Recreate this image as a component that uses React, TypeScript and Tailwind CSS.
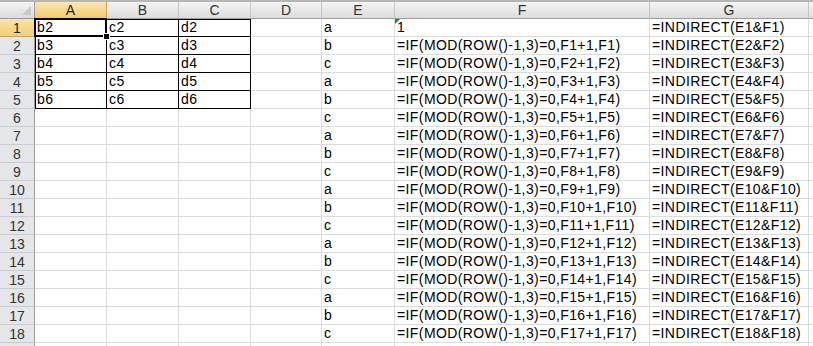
const COLS = ['A', 'B', 'C', 'D', 'E', 'F', 'G', ''];
const ROWS = Array.from({ length: 19 }, (_, i) => i + 1);

const valueAt = (col: string, row: number): string => {
  if (row > 18) return '';
  if (row <= 5) {
    if (col === 'A') return `b${row + 1}`;
    if (col === 'B') return `c${row + 1}`;
    if (col === 'C') return `d${row + 1}`;
  }
  if (col === 'E') return ['a', 'b', 'c'][(row - 1) % 3];
  if (col === 'F') return row === 1 ? '1' : `=IF(MOD(ROW()-1,3)=0,F${row - 1}+1,F${row - 1})`;
  if (col === 'G') return `=INDIRECT(E${row}&F${row})`;
  return '';
};

// black table border around A1:C5
const inTable = (col: string, row: number) => row <= 5 && ['A', 'B', 'C'].includes(col);

function Cell({ col, row }: { col: string; row: number }) {
  const boxed = inTable(col, row);
  const shadows: string[] = [];
  let cls = 'relative h-[18px] border-r border-b px-[2px] flex items-end pb-[1px] overflow-visible whitespace-nowrap text-[14px] leading-[16px] tracking-[0.4px] text-black ';
  cls += boxed ? 'border-black ' : 'border-[#dadcdd] ';
  if (boxed && col === 'A') shadows.push('l');
  if (boxed && row === 1) shadows.push('t');
  if (shadows.length === 2) cls += 'shadow-[inset_1px_1px_0_#000] ';
  else if (shadows[0] === 'l') cls += 'shadow-[inset_1px_0_0_#000] ';
  else if (shadows[0] === 't') cls += 'shadow-[inset_0_1px_0_#000] ';
  return (
    <div className={cls}>
      {col === 'F' && row === 1 && (
        <span className="absolute left-0 top-0 w-0 h-0 border-t-[5px] border-r-[5px] border-t-[#1f8a2e] border-r-transparent" />
      )}
      {col === 'A' && row === 1 && (
        <>
          <span className="absolute -left-[1px] -top-[1px] -right-[1px] -bottom-[1px] border-2 border-black pointer-events-none" />
          <span className="absolute -right-[4px] -bottom-[4px] w-[7px] h-[7px] bg-black border border-white z-10" />
        </>
      )}
      <span className="relative">{valueAt(col, row)}</span>
    </div>
  );
}

export default function App() {
  return (
    <div
      className="w-[813px] h-[346px] overflow-hidden bg-white"
      style={{ fontFamily: '"Liberation Sans", Arial, sans-serif' }}
    >
      <div className="h-[2px] bg-[#b6b6b6]" />
      <div className="grid grid-cols-[35px_72px_72px_72px_71px_73px_255px_159px_1fr]">
        {/* corner */}
        <div className="relative h-[17px] bg-gradient-to-b from-[#f4f4f4] to-[#dcdcdc] border-r border-b border-[#9c9c9c]">
          <span className="absolute right-[3px] bottom-[3px] w-0 h-0 border-b-[9px] border-l-[9px] border-b-[#c8c8c8] border-l-transparent" />
        </div>
        {COLS.map((c) => (
          <div
            key={c || 'x'}
            className={
              'h-[17px] flex items-center justify-center border-r border-b text-[14px] leading-none ' +
              (c === 'A'
                ? 'bg-gradient-to-b from-[#fbe7b4] to-[#f4c968] border-r-[#c4a66a] border-b-[#9c9c9c] text-[#222]'
                : 'bg-gradient-to-b from-[#f4f4f4] to-[#dcdcdc] border-r-[#c6c6c6] border-b-[#9c9c9c] text-[#333]')
            }
          >
            {c}
          </div>
        ))}
        {ROWS.map((r) => (
          <div key={r} className="contents">
            <div
              className={
                'h-[18px] flex items-center justify-center border-r border-b text-[14px] leading-none ' +
                (r === 1
                  ? 'bg-gradient-to-b from-[#fbe3a6] to-[#f5cd74] border-r-[#9c9c9c] border-b-[#c4a66a] text-[#222]'
                  : 'bg-[#e4e6ea] border-r-[#9c9c9c] border-b-[#c9ccd1] text-[#333]')
              }
            >
              {r <= 18 ? r : ''}
            </div>
            {COLS.map((c) => (
              <Cell key={c || 'x'} col={c} row={r} />
            ))}
          </div>
        ))}
      </div>
    </div>
  );
}
